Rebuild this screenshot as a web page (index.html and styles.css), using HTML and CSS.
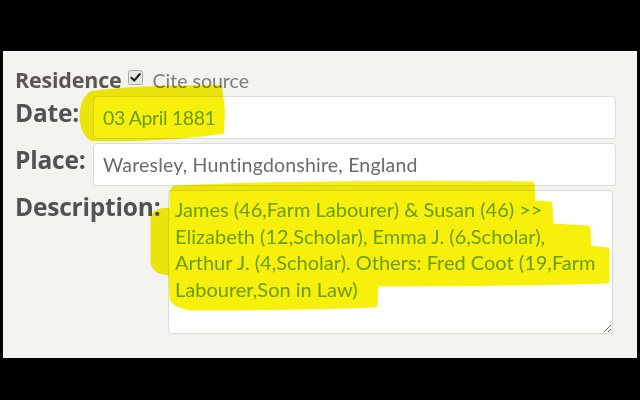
FILE: index.html
```html
<!DOCTYPE html>
<html lang="en">
<head>
<meta charset="utf-8">
<title>Residence</title>
<link rel="stylesheet" href="styles.css">
</head>
<body>
<div class="panel">
  <div class="row head">
    <span class="event">Residence</span>
    <span class="check"><svg width="15" height="15" viewBox="0 0 15 15"><rect x="0.5" y="0.5" width="14" height="14" rx="2" fill="#e6e6e3" stroke="#a8a8a8"/><path d="M3.5 7.8 L6.2 10.6 L11.6 4.2" fill="none" stroke="#222" stroke-width="2.2" stroke-linecap="round" stroke-linejoin="round"/></svg></span>
    <span class="cite">Cite source</span>
  </div>
  <div class="row">
    <label class="lbl short" for="date">Date:</label>
    <input id="date" class="field hl tight" type="text" value="03 April 1881">
  </div>
  <div class="row">
    <label class="lbl short" for="place">Place:</label>
    <input id="place" class="field loose" type="text" value="Waresley, Huntingdonshire, England">
  </div>
  <div class="row">
    <label class="lbl long" for="desc">Description:</label>
    <textarea id="desc" class="area hl">James (46,Farm Labourer) &amp; Susan (46) &gt;&gt; Elizabeth (12,Scholar), Emma J. (6,Scholar), Arthur J. (4,Scholar). Others: Fred Coot (19,Farm Labourer,Son in Law)</textarea>
  </div>
</div>
<svg class="marker" width="640" height="400" viewBox="0 0 640 400">
  <path d="M92 93 C120 89 170 87 220 87 L223 110 L222 132 C180 138 130 140 92 139 C78 132 78 100 92 93 Z" fill="#f7ef0c" stroke="#f7ef0c" stroke-width="4" stroke-linejoin="round"/>
  <path d="M174 188 C260 184 400 183 532 184 L533 203 L550 204 L551 226 L588 228 L589 248 L607 250 L607 281 C540 283 450 284 376 284 L375 305 C320 307 250 308 190 308 C180 306 173 303 172 298 L171 273 C160 273 154 270 153 262 L153 218 C154 212 160 210 172 210 L172 192 Z" fill="#f7ef0c" stroke="#f7ef0c" stroke-width="5" stroke-linejoin="round"/>
</svg>
</body>
</html>
```
FILE: styles.css
```css
* { box-sizing: border-box; }
html, body { margin: 0; padding: 0; }
body {
  width: 640px;
  height: 400px;
  background: #000;
  position: relative;
  overflow: hidden;
  font-family: Lato, "Liberation Sans", sans-serif;
}
.panel {
  margin: 51px 3px 0 3px;
  height: 307px;
  background: #f3f3f0;
  padding: 17px 21px 0 12px;
  display: flex;
  flex-direction: column;
  gap: 4px;
}
.row {
  display: flex;
  align-items: flex-start;
}
.head {
  align-items: baseline;
  height: 24px;
}
.event {
  font-family: "Open Sans", Lato, sans-serif;
  font-size: 21.5px;
  font-weight: 700;
  color: #5a5650;
  line-height: 24px;
  letter-spacing: -0.2px;
}
.check {
  display: inline-flex;
  align-self: flex-start;
  margin: 2px 0 0 6px;
}
.cite {
  font-size: 19.5px;
  color: #7d7d7d;
  line-height: 24px;
  margin-left: 10px;
}
.lbl {
  font-family: "Open Sans", Lato, sans-serif;
  font-size: 24.5px;
  font-weight: 700;
  color: #525252;
  line-height: 30px;
  padding-top: 2px;
  letter-spacing: -0.2px;
}
.short { width: 78px; flex: none; }
.long { width: 153px; flex: none; }
.field {
  flex: 1;
  min-width: 0;
  height: 43px;
  border: 1px solid #dcdcda;
  border-radius: 4px;
  background: #fff;
  padding: 0 9px;
  font-family: inherit;
  font-size: 19.5px;
  color: #6b6b6b;
  outline: none;
}
.tight { letter-spacing: -0.4px; }
.loose { letter-spacing: 0.2px; }
.area {
  width: 445px;
  height: 144px;
  border: 1px solid #dcdcda;
  border-radius: 4px;
  background: #fff;
  padding: 5px 14px 5px 6px;
  font-family: inherit;
  font-size: 20px;
  line-height: 26.5px;
  color: #6b6b6b;
  resize: both;
  outline: none;
}
.hl { color: #6ea82a; }
.marker {
  position: absolute;
  left: 0;
  top: 0;
  mix-blend-mode: multiply;
  pointer-events: none;
}
```
